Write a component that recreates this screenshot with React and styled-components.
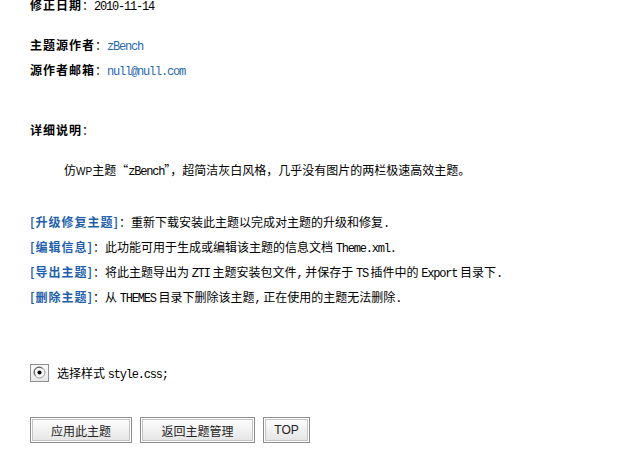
import React from "react";
import styled, { createGlobalStyle } from "styled-components";

const GlobalStyle = createGlobalStyle`
  body {
    margin: 0;
    background: #ffffff;
    color: #000000;
    font-family: "Noto Sans CJK SC", "Liberation Sans", sans-serif;
    font-size: 12px;
  }
`;

function Radio() {
  return (
    <RadioBox>
      <svg width="13" height="13" viewBox="0 0 13 13">
        <circle cx="6.5" cy="6.5" r="5.5" fill="#f6f6f6" stroke="#9a9a9a" />
        <path d="M2.6 9.4 A4.2 4.2 0 0 1 9.4 2.6" fill="none" stroke="#555" strokeWidth="1" />
        <circle cx="6.5" cy="6.5" r="2" fill="#000" />
      </svg>
    </RadioBox>
  );
}

function App() {
  return (
    <Page>
      <GlobalStyle />
      <Row>
        <Label>修正日期</Label>：<Mono>2010-11-14</Mono>
      </Row>

      <Row $gap={15}>
        <Label>主题源作者</Label>：<Mono $color="#2a68b0">zBench</Mono>
      </Row>
      <Row>
        <Label>源作者邮箱</Label>：<Mono $color="#2a68b0">null@null.com</Mono>
      </Row>

      <Row $gap={35}>
        <Label>详细说明</Label>：
      </Row>
      <Row $gap={15} $indent={34}>
        仿<Narrow>WP</Narrow>主题“<Mono>zBench</Mono>”，超简洁灰白风格，几乎没有图片的两栏极速高效主题。
      </Row>

      <Actions>
        <Row>
          <Link>[升级修复主题]</Link>：重新下载安装此主题以完成对主题的升级和修复<Mono>.</Mono>
        </Row>
        <Row>
          <Link>[编辑信息]</Link>：此功能可用于生成或编辑该主题的信息文档 <Mono>Theme.xml.</Mono>
        </Row>
        <Row>
          <Link>[导出主题]</Link>：将此主题导出为 <Mono>ZTI</Mono> 主题安装包文件<Mono>,</Mono> 并保存于 <Mono>TS</Mono> 插件中的 <Mono>Export</Mono> 目录下<Mono>.</Mono>
        </Row>
        <Row>
          <Link>[删除主题]</Link>：从 <Mono>THEMES</Mono> 目录下删除该主题<Mono>,</Mono> 正在使用的主题无法删除<Mono>.</Mono>
        </Row>
      </Actions>

      <StyleChoice>
        <Radio />
        <span>
          选择样式 <Mono>style.css;</Mono>
        </span>
      </StyleChoice>

      <Buttons>
        <Button $width={102}>应用此主题</Button>
        <Button $width={115}>返回主题管理</Button>
        <Button $width={47} $latin>TOP</Button>
      </Buttons>
    </Page>
  );
}

export default App;

const Page = styled.div`
  margin-top: -8px;
  padding: 0 0 20px 30px;
`;

const Row = styled.div`
  height: 25px;
  line-height: 25px;
  white-space: nowrap;
  margin-top: ${(p) => p.$gap || 0}px;
  padding-left: ${(p) => p.$indent || 0}px;
`;

const Label = styled.span`
  font-weight: 700;
  letter-spacing: 1px;
`;

const Mono = styled.span`
  font-family: "Liberation Mono", "DejaVu Sans Mono", monospace;
  font-size: 12px;
  line-height: 1;
  letter-spacing: -1.2px;
  color: ${(p) => p.$color || "#000000"};
`;

const Narrow = styled.span`
  font-family: "Liberation Sans", sans-serif;
  font-size: 10px;
  line-height: 1;
`;

const Actions = styled.div`
  margin-top: 27px;
`;

const Link = styled.span`
  color: #1f5fae;
  font-weight: 700;
  letter-spacing: 1px;
`;

const StyleChoice = styled.div`
  display: flex;
  align-items: center;
  gap: 8px;
  height: 19px;
  margin-top: 54px;
`;

const RadioBox = styled.span`
  width: 17px;
  height: 16px;
  border: 1px solid #8e8e8e;
  background: linear-gradient(#fafafa, #e9e9e9);
  display: flex;
  align-items: center;
  justify-content: center;
`;

const Buttons = styled.div`
  display: flex;
  gap: 8px;
  margin-top: 35px;
`;

const Button = styled.button`
  width: ${(p) => p.$width}px;
  height: 26px;
  padding: 0;
  border: 1px solid #8c8c8c;
  box-shadow: inset 0 0 0 1px #ffffff, inset 0 0 0 2px #c4c4c4;
  background: linear-gradient(#fefefe, #e4e4e4);
  color: #222222;
  font-family: ${(p) =>
    p.$latin ? '"Liberation Sans", sans-serif' : '"Noto Sans CJK SC", sans-serif'};
  font-size: 12px;
  cursor: pointer;
`;
